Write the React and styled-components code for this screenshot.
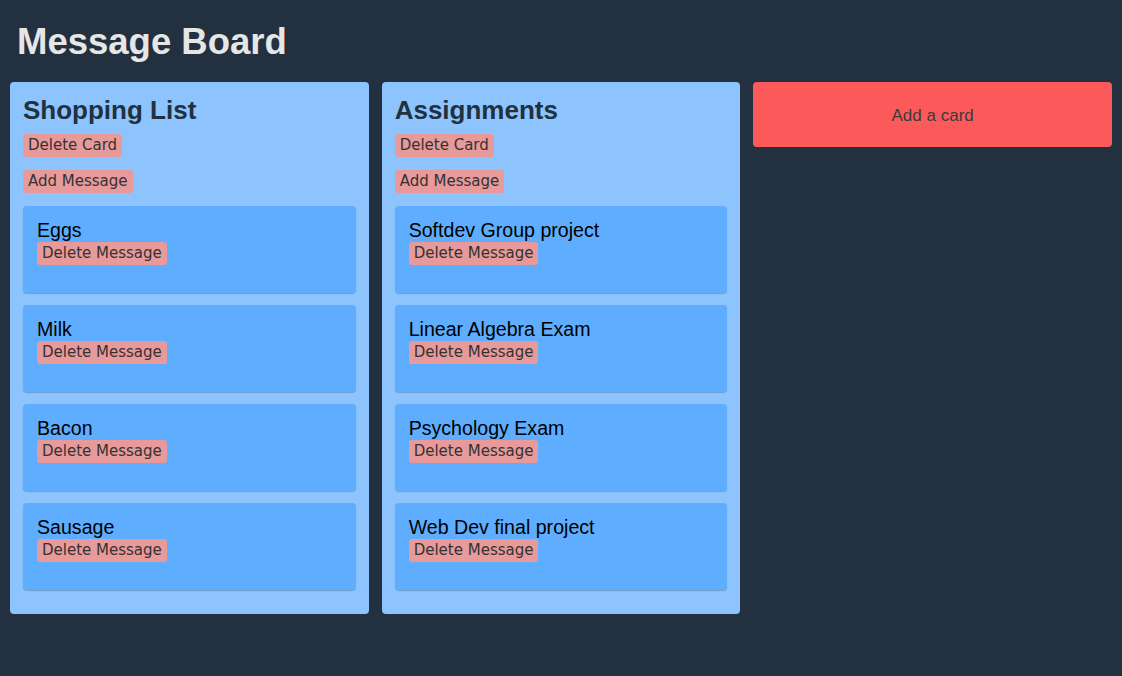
import React from "react";
import styled, { createGlobalStyle } from "styled-components";

const Global = createGlobalStyle`
  *, *::before, *::after { box-sizing: border-box; }
  html, body { margin: 0; padding: 0; background: #22303f; }
  body { font-family: "Liberation Sans", Arial, sans-serif; }
`;

const Page = styled.div`
  padding: 0 10px;
  min-height: 676px;
`;

const Title = styled.h1`
  margin: 0;
  padding: 21px 0 19px 7px;
  font-size: 36.5px;
  line-height: 42px;
  font-weight: bold;
  color: #e6e6e6;
`;

const Board = styled.div`
  display: grid;
  grid-template-columns: repeat(3, minmax(0, 1fr));
  gap: 13px;
  align-items: start;
`;

const Column = styled.section`
  background: #8dc4fd;
  border-radius: 4px;
  padding: 13px 13px 24px;
  display: flex;
  flex-direction: column;
  align-items: flex-start;
`;

const ColumnTitle = styled.h2`
  margin: 0 0 9px;
  font-size: 26px;
  line-height: 30px;
  font-weight: bold;
  color: #22303f;
`;

const Pill = styled.button`
  font-family: "DejaVu Sans", Tahoma, sans-serif;
  font-size: 15px;
  line-height: 19px;
  color: #333;
  background: #e89a9a;
  border: none;
  border-radius: 3px;
  padding: 2px 5px;
  margin: ${(p) => p.$mb || 0};
  cursor: pointer;
`;

const Messages = styled.div`
  align-self: stretch;
  display: flex;
  flex-direction: column;
  gap: 12px;
`;

const Message = styled.div`
  background: #5eadfe;
  border-radius: 4px;
  box-shadow: 0 1px 1px rgba(0, 0, 0, 0.2);
  padding: 12px 14px 28px;
  display: flex;
  flex-direction: column;
  align-items: flex-start;
`;

const MessageText = styled.div`
  font-size: 19.6px;
  line-height: 24px;
  color: #000;
`;

const AddCard = styled.button`
  height: 65px;
  background: #fc5a5a;
  border: none;
  border-radius: 4px;
  padding: 2px 0 0;
  font-family: "Liberation Sans", Arial, sans-serif;
  font-size: 17px;
  color: #3a3a3a;
  cursor: pointer;
`;

const data = [
  { title: "Shopping List", items: ["Eggs", "Milk", "Bacon", "Sausage"] },
  {
    title: "Assignments",
    items: ["Softdev Group project", "Linear Algebra Exam", "Psychology Exam", "Web Dev final project"],
  },
];

export default function App() {
  return (
    <Page>
      <Global />
      <Title>Message Board</Title>
      <Board>
        {data.map((col) => (
          <Column key={col.title}>
            <ColumnTitle>{col.title}</ColumnTitle>
            <Pill $mb="0 0 13px">Delete Card</Pill>
            <Pill $mb="0 0 13px">Add Message</Pill>
            <Messages>
              {col.items.map((it) => (
                <Message key={it}>
                  <MessageText>{it}</MessageText>
                  <Pill>Delete Message</Pill>
                </Message>
              ))}
            </Messages>
          </Column>
        ))}
        <AddCard>Add a card</AddCard>
      </Board>
    </Page>
  );
}
